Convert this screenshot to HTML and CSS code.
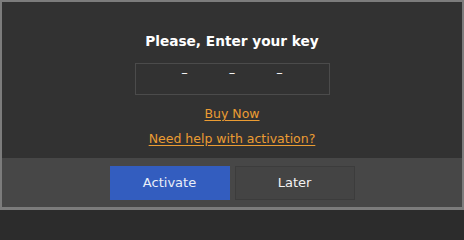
FILE: index.html
```html
<!DOCTYPE html>
<html>
<head>
<meta charset="utf-8">
<link rel="stylesheet" href="styles.css">
</head>
<body>
<div class="dialog">
  <div class="main">
    <div class="title">Please, Enter your key</div>
    <div class="keybox">
      <span class="dash">–</span>
      <span class="dash">–</span>
      <span class="dash">–</span>
    </div>
    <a class="link buy" href="#">Buy Now</a>
    <a class="link help" href="#">Need help with activation?</a>
  </div>
  <div class="footer">
    <button class="btn primary">Activate</button>
    <button class="btn secondary">Later</button>
  </div>
</div>
</body>
</html>
```
FILE: styles.css
```css
html, body {
  margin: 0;
  padding: 0;
  background: #2c2c2c;
  width: 464px;
  height: 212px;
  overflow: hidden;
}
.dialog {
  width: 464px;
  height: 210px;
  box-sizing: border-box;
  border: 2px solid #7c7c7c;
  border-bottom-width: 3px;
  display: flex;
  flex-direction: column;
  font-family: "DejaVu Sans", Verdana, sans-serif;
}
.main {
  height: 156px;
  background: #323232;
  display: flex;
  flex-direction: column;
  align-items: center;
  padding-top: 31px;
  box-sizing: border-box;
}
.title {
  color: #ffffff;
  font-weight: bold;
  font-size: 13.7px;
  line-height: 16px;
  height: 16px;
}
.keybox {
  margin-top: 14px;
  width: 195px;
  height: 32px;
  box-sizing: border-box;
  border: 1px solid #4b4b4b;
  display: flex;
  justify-content: center;
  gap: 41px;
  padding-top: 2px;
  color: #ffffff;
  font-size: 13px;
  line-height: 14px;
}
.dash {
  display: block;
}
.link {
  color: #eb9c33;
  font-size: 12.5px;
  line-height: 15px;
  text-decoration: underline;
  text-underline-offset: 2px;
}
.buy {
  margin-top: 11px;
}
.help {
  margin-top: 10px;
}
.footer {
  flex: 1;
  background: #474747;
  display: flex;
  justify-content: center;
  align-items: flex-start;
  gap: 5px;
  padding-top: 8px;
  box-sizing: border-box;
}
.btn {
  width: 120px;
  height: 34px;
  margin: 0;
  padding: 0;
  font-family: "DejaVu Sans", Verdana, sans-serif;
  font-size: 13px;
  line-height: 32px;
  box-sizing: border-box;
  cursor: pointer;
}
.primary {
  background: #335dbf;
  border: 1px solid #335dbf;
  color: #e9eef8;
}
.secondary {
  background: #444444;
  border: 1px solid #3c3c3c;
  color: #f2f2f2;
}
```
